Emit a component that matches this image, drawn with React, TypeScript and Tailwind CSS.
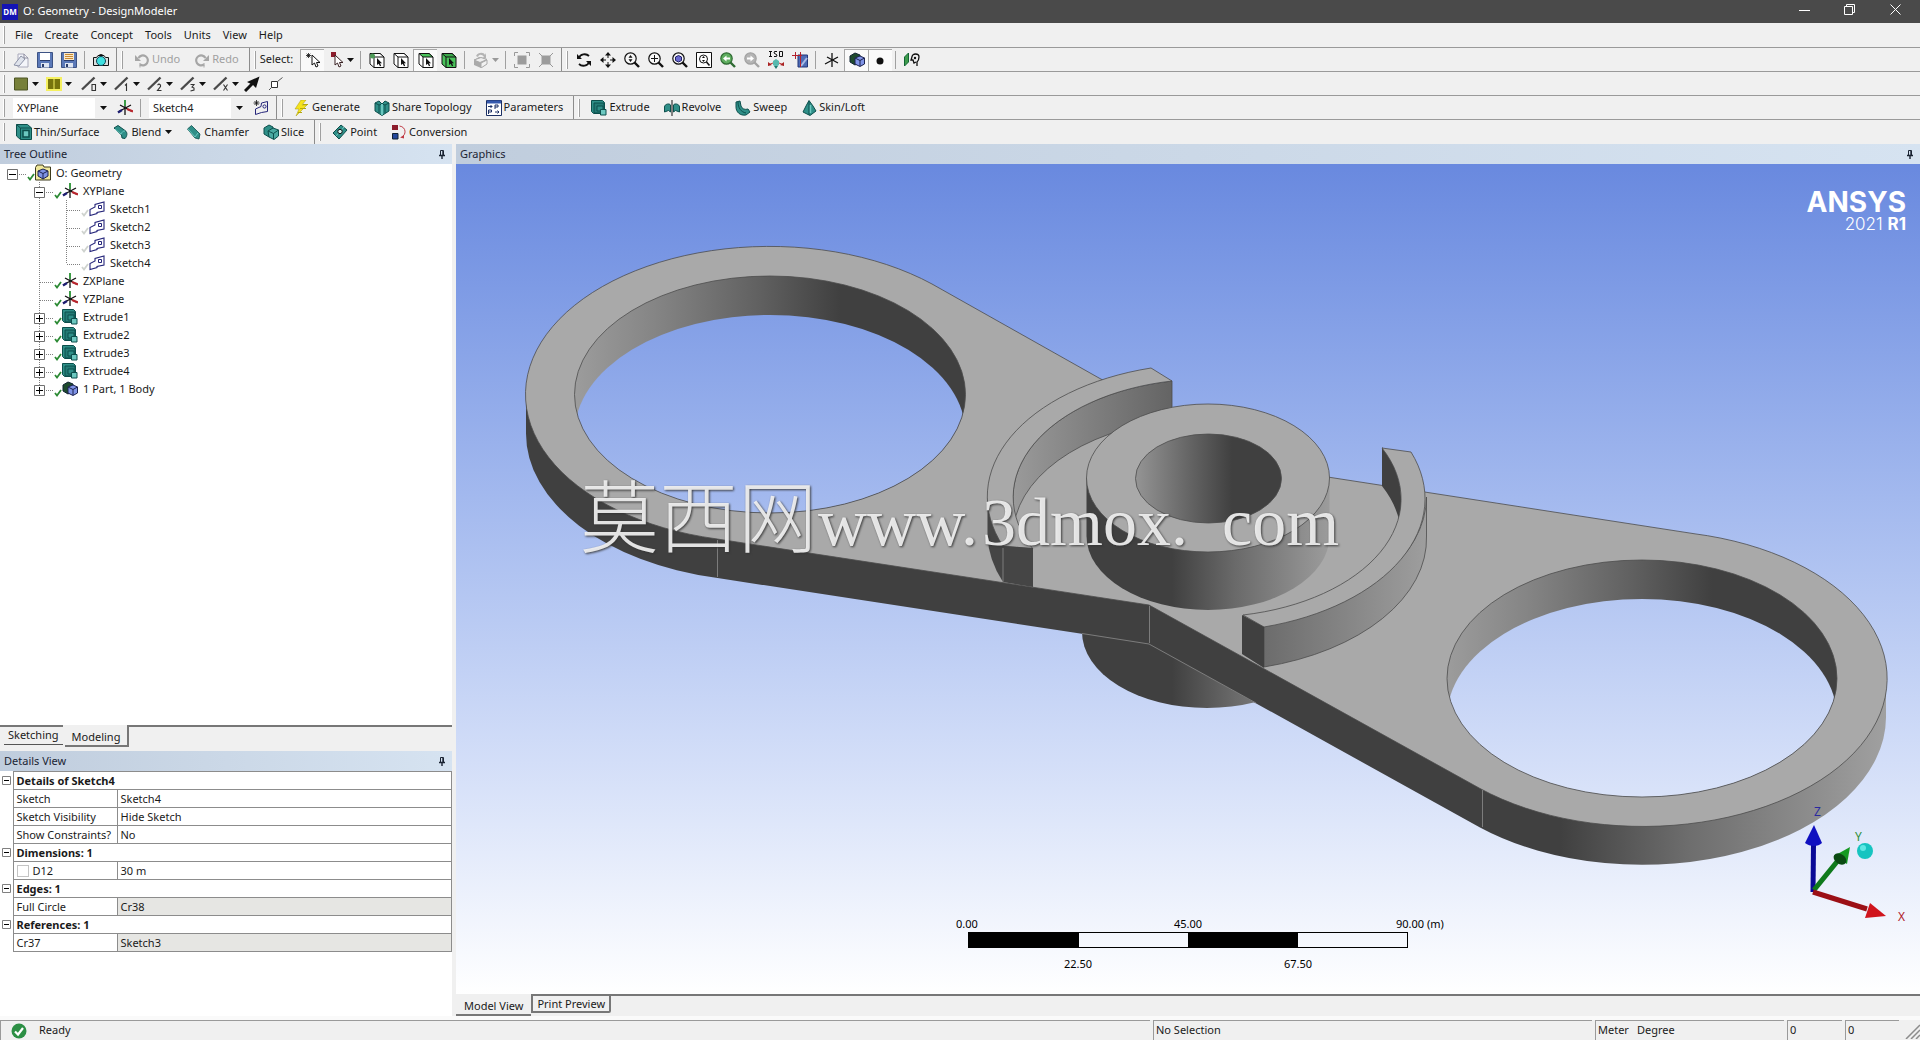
import type { ReactNode } from "react";
import clsx from "clsx";

const BLACK = "#111";
const TEAL = "#2f8f88";
const TEAL_DARK = "#0d4f4c";
const TEAL_LIGHT = "#6cc8c0";

function Svg({ children, size = 16 }: { children: ReactNode; size?: number }) {
  return (
    <svg width={size} height={size} viewBox="0 0 16 16" fill="none" className="shrink-0" aria-hidden="true">
      {children}
    </svg>
  );
}

/* ---------- toolbar icons ---------- */

const NewIcon = () => (
  <Svg>
    <path d="M5 2h6l4 4v9H5z" fill="#f4f5fa" stroke="#aab" />
    <path d="M1 13 8 4l4 3-6 7z" fill="#dfe3ec" stroke="#8d93a8" />
    <path d="M11 2v4h4" stroke="#889" />
  </Svg>
);

const SaveIcon = ({ list }: { list?: boolean }) => (
  <Svg>
    <path d="M.5.5h15v15h-15z" fill="#5b79b8" stroke="#3d5384" />
    <path d="M3 1h10v7H3z" fill={list ? "#fbe9c8" : "#fff"} />
    <path d="M3 8.500h10" stroke="#2b3c68" />
    {list && <path d="M4 2.500h8M4 4.500h8M4 6.500h8" stroke="#c88a35" />}
    <path d="M4 11h8v4.500H4z" fill="#dfe6f2" />
    <path d="M5 12h2v3H5z" fill="#2b3c68" />
  </Svg>
);

const CameraIcon = () => (
  <Svg>
    <path d="M.5 5.500h3L5 3.500h6l1.500 2h3v8H.5z" fill="#d8dede" stroke={BLACK} />
    <circle cx="8" cy="9" r="4.500" fill="#3fe0e0" stroke="#145" />
    <path d="M6.500 2.500h3" stroke="#333" />
  </Svg>
);

const UndoIcon = ({ flip }: { flip?: boolean }) => (
  <Svg>
    <g transform={flip ? "matrix(-1 0 0 1 16 0)" : undefined}>
      <path d="M4.500 6A5 5 0 1 1 6 12.500" stroke="#a6a6a6" strokeWidth="2.200" />
      <path d="M1 3v6h6z" fill="#a6a6a6" />
      <path d="M6 11v4.500" stroke="#a6a6a6" />
    </g>
  </Svg>
);

const CURSOR = "M7 3v10l2.500-2 1.500 4 2-1-1.500-3.500H15z";

const SelectIcon = () => (
  <Svg>
    <path d="M3.500 1v5M1 3.500h5M1.700 1.700l3.600 3.600M5.300 1.700 1.700 5.300" stroke={BLACK} strokeWidth=".8" />
    <path d={CURSOR} fill="#fff" stroke={BLACK} />
  </Svg>
);

const SelectModeIcon = () => (
  <Svg>
    <path d="M3 0h5v5H3z" fill="#8c1c2c" />
    <path d={CURSOR} fill="#fff" stroke="#3a2224" />
  </Svg>
);

function FilterCube({ front = "#fff", top = "#fff", dot }: { front?: string; top?: string; dot?: boolean }) {
  return (
    <Svg>
      <path d="M1 1.500h10l4 3.500v10.500H5L1 12z" fill={front} stroke={BLACK} />
      <path d="M1 1.500h10l4 3.500H5z" fill={top} stroke={BLACK} />
      <path d="M5 5v10.500" stroke={BLACK} />
      {dot && <circle cx="3.500" cy="4" r="2.500" fill="#4d9b57" />}
      <path d="M8 6v7l1.700-1.300 1.300 2.600 1.200-.6-1.200-2.500H13z" fill={BLACK} />
    </Svg>
  );
}

const GreyCube = () => (
  <Svg>
    <path d="M1 8l5-3 8 2v5l-6 4-7-3z" fill="#aaa" />
    <path d="M1 8l6 2.500 7-3-6-2z" fill="#eee" stroke="#aaa" />
    <path d="M8 11v5l6-4V8z" fill="#f2f2f2" stroke="#aaa" />
    <path d="M3 4c2-4 8-4 9-1l1-2v5H9l2-1C9 2 6 2 5 5z" fill="#b4b4b4" />
  </Svg>
);

const GreyBox = ({ diagonal }: { diagonal?: boolean }) => (
  <Svg>
    <path d="M3.500 3.500h9v9h-9z" fill="#9c9c9c" />
    <path d={diagonal ? "M1 1l3 3M15 1l-3 3M1 15l3-3M15 15l-3-3" : "M.5 4V.5H4M12 .5h3.500V4M15.500 12v3.500H12M4 15.500H.5V12"} stroke="#999" />
  </Svg>
);

const RotateIcon = () => (
  <Svg>
    <path d="M3 6c1-4 7-5 10-2M13 10c-1 4-7 5-10 2" stroke={BLACK} strokeWidth="1.800" />
    <path d="M1 2v5h5zM15 14V9h-5z" fill={BLACK} />
  </Svg>
);

const PanIcon = () => (
  <Svg>
    <path d="M8 3v3M8 10v3M3 8h3M10 8h3" stroke={BLACK} />
    <path d="M8 0l3 3.500H5zM8 16l3-3.500H5zM0 8l3.500-3v6zM16 8l-3.500-3v6z" fill={BLACK} />
  </Svg>
);

function Magnifier({ color = BLACK, fill = "#f7f7f7", children }: { color?: string; fill?: string; children?: ReactNode }) {
  return (
    <Svg>
      <path d="M10.500 10.500 15 15" stroke={color} strokeWidth="2.400" />
      <circle cx="6.500" cy="6.500" r="5.700" fill={fill} stroke={color} strokeWidth="1.200" />
      {children}
    </Svg>
  );
}

const IsoIcon = () => (
  <svg width="18" height="18" viewBox="0 0 18 18" fill="none" aria-hidden="true">
    <path d="M2 .5h3M3.500 .5v5M2 5.500h3M10 .5H7.500L7 2l3 2-.5 1.500H7M12.500 .5h3v5h-3z" stroke={BLACK} />
    <path d="M9 8l3 2v4l-3 2-3-2v-4z" fill="#58b9ae" />
    <path d="M6 12l-5 2M12 12l5 2" stroke="#b33" />
    <path d="M1 11v4l4-1zM17 11v4l-4-1z" fill="#a22" />
    <path d="M7 15h4l-2 3z" fill="#1f7a70" />
  </svg>
);

const PlaneViewIcon = () => (
  <Svg>
    <path d="M6 3h9.500v12H6z" fill="#4d6bb5" stroke="#23377a" />
    <path d="M9 14l6-8" stroke="#a9bbe6" strokeWidth="2" />
    <path d="M0 3.500h10M3.500 0v7M8.500 0v15" stroke="#b3202c" />
  </Svg>
);

const AxisIcon = ({ color }: { color?: boolean }) => (
  <Svg>
    <path d="M8 1v14" stroke={BLACK} strokeWidth="1.300" />
    <path d="M1 12l13-7M3 5l11 6" stroke={BLACK} strokeWidth="1.300" />
    {color && (
      <>
        <path d="M8 6V0" stroke="#3c9b46" strokeWidth="2" />
        <path d="M10 9l6 2.500" stroke="#b8242c" strokeWidth="2.200" />
        <path d="M5 10l-4 2.500" stroke="#1c1c70" strokeWidth="2.200" />
      </>
    )}
  </Svg>
);

const BodyIcon = () => (
  <Svg>
    <path d="M1 4l5-3 5 2v7l-5 3-5-3z" fill="#1e4a2c" stroke="#123" />
    <path d="M6 6l5-2 4.500 2v6L11 14.500 6 12z" fill="#7f93e6" stroke="#1d2350" />
    <path d="M6 6l5 2.500L15.500 6M11 8.500V14" stroke="#1d2350" />
  </Svg>
);

const LookAtIcon = () => (
  <Svg>
    <path d="M.5 5l4-4v9l-4 4z" fill="#3e9c4c" stroke="#163" />
    <path d="M8 5c0-4 7-4 7 0 0 3-1 4-2 5v4M8 5l-1 3h2l1 3 2-1" stroke={BLACK} strokeWidth="1.300" />
    <circle cx="11" cy="6" r="1.200" fill={BLACK} />
  </Svg>
);

const LineIcon = ({ mark }: { mark: string }) => (
  <svg width="20" height="16" viewBox="-6 0 20 16" fill="none" aria-hidden="true">
    <path d="M-1 13.500 11.500 1.500" stroke="#4a4a4a" strokeWidth="2.400" />
    <path d={mark} stroke="#333" strokeWidth="1.100" />
  </svg>
);

const LINE_MARKS = [
  "M9 8.500h3.500v6H9z",
  "M9 9.500l1.500-1.500v7",
  "M8.500 9l1.500-1 1.500 1v1.500L8.500 14.500h4",
  "M8.500 8.500H12l-2 2.500 2 1v2l-3.500 1",
  "M8.500 8.500l4 6M12.500 8.500l-4 6",
];

const ArrowIcon = () => (
  <Svg>
    <path d="M1 15l8-8" stroke={BLACK} strokeWidth="3" />
    <path d="M15.500 .5 12 12 9 9 3 6z" fill={BLACK} />
  </Svg>
);

const NodeIcon = () => (
  <Svg>
    <path d="M3.500 5.500h6v6h-6z" fill="#fff" stroke="#333" />
    <path d="M9.500 5.500l5-4M1 14l2.500-2.500" stroke="#555" />
  </Svg>
);

const SketchIcon = () => (
  <Svg>
    <path d="M1 14.500V8.500l5-2.500V3.500L15 1v9l-7 1.500v1z" fill="#fff" stroke="#25257a" strokeWidth="1.100" />
    <path d="M9.500 4.500h3v3h-3z" stroke="#25257a" />
  </Svg>
);

const NewSketchIcon = () => (
  <Svg>
    <path d="M2.500 14.500V9L8 6.500 8.500 3l6-1.500v10l-6 1z" stroke="#25257a" />
    <circle cx="11.500" cy="6.500" r="1.600" stroke="#25257a" />
    <path d="M3.500 0v6M.5 3h6M1.500 1l4 4M5.500 1l-4 4" stroke={BLACK} strokeWidth=".8" />
  </Svg>
);

const GenerateIcon = () => (
  <Svg>
    <path d="M7 0h5L8 5h5L2 16l3-7H1z" fill="#f6e31c" stroke="#a79a10" strokeWidth=".5" />
    <path d="M9 4.500h5M6 8.500h6M4 12.500h4" stroke="#b5a70c" />
  </Svg>
);

const ShareIcon = () => (
  <Svg>
    <path d="M1 3l4-2 3 3 3-3 4 2v8l-7 4.500L1 11z" fill={TEAL} stroke={TEAL_DARK} />
    <path d="M1 3l4 2 3-1 3 1 4-2" stroke={TEAL_DARK} />
    <path d="M8 4v11" stroke={TEAL_LIGHT} strokeWidth="2" />
    <path d="M5 5v8M11 5v8" stroke={TEAL_DARK} />
  </Svg>
);

const ParametersIcon = () => (
  <Svg>
    <path d="M.5 .5h15v15H.5z" fill="#fff" stroke="#1c2f63" />
    <path d="M1 2h14" stroke="#3558ac" strokeWidth="3" />
    <path d="M2 6.500h4M4.500 5l1.500 1.500L4.500 8M9 9V5h3v2H9M2.500 14v-4h3v2h-3M9 12h4M11.500 10.500 13 12l-1.500 1.500" stroke="#1c2f63" />
  </Svg>
);

const ExtrudeIcon = () => (
  <Svg>
    <path d="M.5 .5h11l2 2v11h-11l-2-2z" fill={TEAL} stroke={TEAL_DARK} />
    <path d="M3 3h10v10H3z" fill="#237a74" stroke={TEAL_DARK} />
    <path d="M6 6h6v5H6z" fill={TEAL} stroke={TEAL_DARK} />
    <path d="M9.500 9.500h5.500v5.500H9.500z" fill={TEAL_LIGHT} stroke={TEAL_DARK} />
  </Svg>
);

const RevolveIcon = () => (
  <Svg>
    <path d="M.5 12V7c0-3 5-4 6-2v7l-2-1.500zM15.500 12V7c0-3-5-4-6-2v7l2-1.500z" fill={TEAL} stroke={TEAL_DARK} />
    <path d="M8 0v16" stroke={BLACK} />
  </Svg>
);

const SweepIcon = () => (
  <Svg>
    <path d="M1 2l4-1 1 5c1 3 4 4 7 3l2 3-4 3C5 16 1 12 1 7z" fill={TEAL} stroke={TEAL_DARK} />
    <path d="M3 2c0 6 3 10 8 11" stroke={TEAL_DARK} />
  </Svg>
);

const SkinIcon = () => (
  <Svg>
    <path d="M8 .5 12 6l3 5-6 4.500L2 12l3-6z" fill={TEAL} stroke={TEAL_DARK} />
    <path d="M8 1v14" stroke={TEAL_DARK} />
    <path d="M9.500 5v8" stroke={TEAL_LIGHT} strokeWidth="1.500" />
  </Svg>
);

const ThinIcon = () => (
  <Svg>
    <path d="M.5 .5h11l4 3.500v11.500H4.500l-4-3.500z" fill={TEAL} stroke={TEAL_DARK} />
    <path d="M.5 .5 4.500 4h11M4.500 4v11.500" stroke={TEAL_DARK} />
    <path d="M7 6.500h6v6.500H7z" fill={TEAL_LIGHT} stroke={TEAL_DARK} strokeWidth="1.500" />
  </Svg>
);

const BlendIcon = () => (
  <Svg>
    <path d="M1 4l4-2.500 7 5c3 2 2 6 0 8L9 14l-.5-3z" fill={TEAL} stroke={TEAL_DARK} />
    <path d="M2 5l6 5c1-2 2-3 4-3" stroke={TEAL_LIGHT} />
  </Svg>
);

const ChamferIcon = () => (
  <Svg>
    <path d="M1.500 5l4-3.500L14 10l-1 5-4-1z" fill={TEAL} stroke={TEAL_DARK} strokeWidth=".8" />
    <path d="M2 5l7 8 3-4" stroke={TEAL_LIGHT} />
  </Svg>
);

const SliceIcon = () => (
  <Svg>
    <path d="M1 4l5-3 4 2v7l-4 3-5-3z" fill={TEAL} stroke={TEAL_DARK} />
    <path d="M5 7l5-3 5.500 2v6L11 15.500 6 13z" fill="#4aaaa2" stroke={TEAL_DARK} />
    <path d="M5 7l5.500 2.500 5-3.500M10.500 9.500V15" stroke={TEAL_DARK} />
  </Svg>
);

const PointIcon = () => (
  <Svg>
    <path d="M1 9 9 1l6 5-8 9z" fill={TEAL} stroke={TEAL_DARK} />
    <path d="M4 12l8-9" stroke={TEAL_LIGHT} />
    <circle cx="8" cy="7.500" r="2.200" fill="#d7f3f0" stroke={BLACK} />
  </Svg>
);

const ConversionIcon = () => (
  <Svg>
    <path d="M1 1h6v5H1z" fill="#8c1c2c" />
    <path d="M1.500 9.500h5.500v5.500H1.500z" fill="#23479b" stroke="#123" />
    <path d="M8.500 2c7 1 7 9 2 11" stroke="#c03a44" />
    <path d="M9 13.500l4-2v3z" fill="#c03a44" />
  </Svg>
);

const ProjectIcon = () => (
  <svg width="16" height="18" viewBox="0 0 16 18" fill="none" aria-hidden="true">
    <path d="M.5 3.500 2 1h6l1 2h6.500v13H.5z" fill="#efe79a" stroke="#3c3a1c" />
    <path d="M3 7l5-2 5 2v5l-5 3-5-3z" fill="#7f93e6" stroke="#1d2350" />
    <path d="M3 7l5 2.500L13 7M8 9.500V15" stroke="#1d2350" />
  </svg>
);

const PinIcon = () => (
  <svg width="8" height="11" viewBox="0 0 8 11" fill="none" aria-hidden="true">
    <path d="M2.500 6V1.500h3V6" stroke="#1b2433" />
    <path d="M5 2v4M1 6.500h6M4 7v3" stroke="#1b2433" strokeWidth="1.400" />
  </svg>
);

const Caret = ({ muted }: { muted?: boolean }) => (
  <svg width="7" height="4" viewBox="0 0 7 4" className="shrink-0" aria-hidden="true">
    <path d="M0 0h7L3.500 4z" fill={muted ? "#999" : BLACK} />
  </svg>
);

/* ---------- toolbar parts ---------- */

function ToolRow({ children, last }: { children: ReactNode; last?: boolean }) {
  return (
    <div className={clsx("flex h-6 items-stretch", !last && "border-b border-[#9a9a9a]")}>{children}</div>
  );
}

function Group({ children, end }: { children: ReactNode; end?: boolean }) {
  return (
    <div className={clsx("flex items-center pl-[3px]", end && "mr-px border-r border-[#8c8c8c] pr-[3px]")}>
      <span className="mr-1 h-[18px] w-[2px] shrink-0 border-r border-[#a0a0a0] bg-white" />
      {children}
    </div>
  );
}

const Sep = () => <span className="mr-1 ml-[3px] h-[18px] w-px shrink-0 bg-[#a0a0a0]" />;

function Tool({ label, children, pressed, wide }: { label: string; children: ReactNode; pressed?: boolean; wide?: boolean }) {
  return (
    <button
      type="button"
      title={label}
      aria-label={label}
      className={clsx(
        "flex h-[22px] shrink-0 items-center justify-center gap-[3px]",
        wide ? "w-[33px]" : "w-6",
        pressed && "border-t border-l border-[#a8a8a8] bg-[#fafafa]",
      )}
    >
      {children}
    </button>
  );
}

function TextTool({ icon, label, caret, disabled }: { icon: ReactNode; label: string; caret?: boolean; disabled?: boolean }) {
  return (
    <button
      type="button"
      disabled={disabled}
      className={clsx("flex h-[22px] shrink-0 items-center gap-[2px] px-[7px]", disabled && "text-[#a0a0a0]")}
    >
      {icon}
      <span>{label}</span>
      {caret && (
        <span className="ml-[2px]">
          <Caret />
        </span>
      )}
    </button>
  );
}

function Picker({ label, value }: { label: string; value: string }) {
  return (
    <div className="relative flex h-5 items-center">
      <select
        aria-label={label}
        className="h-5 w-[98px] appearance-none bg-white pl-1 text-[11px] leading-4 text-[#222]"
        defaultValue={value}
      >
        <option>{value}</option>
      </select>
      <span className="pointer-events-none absolute inset-y-0 right-0 flex w-4 items-center justify-center bg-[#f0f0f0]">
        <Caret />
      </span>
    </div>
  );
}

function PanelHeader({ title }: { title: string }) {
  return (
    <header className="flex h-5 shrink-0 items-center justify-between bg-linear-to-r from-[#c0cddd] to-[#d6e3f1] pr-1.5 pl-1 text-[#1b2433]">
      <h2>{title}</h2>
      <button type="button" aria-label={`Pin ${title}`}>
        <PinIcon />
      </button>
    </header>
  );
}

/* ---------- tree outline ---------- */

type Cell = "plus" | "minus" | "tee" | "corner" | "pass" | "blank";

interface TreeItem {
  label: string;
  icon: ReactNode;
  cells: Cell[];
  faded?: boolean;
}

const plane = <AxisIcon color />;

const TREE: TreeItem[] = [
  { label: "O: Geometry", icon: <ProjectIcon />, cells: ["minus"] },
  { label: "XYPlane", icon: plane, cells: ["blank", "minus"] },
  { label: "Sketch1", icon: <SketchIcon />, cells: ["blank", "pass", "tee"], faded: true },
  { label: "Sketch2", icon: <SketchIcon />, cells: ["blank", "pass", "tee"], faded: true },
  { label: "Sketch3", icon: <SketchIcon />, cells: ["blank", "pass", "tee"], faded: true },
  { label: "Sketch4", icon: <SketchIcon />, cells: ["blank", "pass", "corner"], faded: true },
  { label: "ZXPlane", icon: plane, cells: ["blank", "tee"] },
  { label: "YZPlane", icon: plane, cells: ["blank", "tee"] },
  { label: "Extrude1", icon: <ExtrudeIcon />, cells: ["blank", "plus"] },
  { label: "Extrude2", icon: <ExtrudeIcon />, cells: ["blank", "plus"] },
  { label: "Extrude3", icon: <ExtrudeIcon />, cells: ["blank", "plus"] },
  { label: "Extrude4", icon: <ExtrudeIcon />, cells: ["blank", "plus"] },
  { label: "1 Part, 1 Body", icon: <BodyIcon />, cells: ["blank", "plus"] },
];

function GuideCell({ kind, root, end }: { kind: Cell; root: boolean; end: boolean }) {
  const box = kind === "plus" || kind === "minus";
  return (
    <svg width="27" height="18" viewBox="0 0 27 18" fill="none" className="shrink-0" aria-hidden="true">
      <g stroke="#808080" strokeDasharray="1 1">
        {kind !== "blank" && !root && <path d={kind === "corner" || end ? "M12.500 0v10" : "M12.500 0v18"} />}
        {kind !== "blank" && kind !== "pass" && <path d="M13 10.500h13" />}
      </g>
      {box && (
        <>
          <path d="M7.500 5.500h10v10h-10z" fill="#fff" stroke="#707070" />
          <path d={kind === "plus" ? "M9 10.500h7M12.500 7v7" : "M9 10.500h7"} stroke="#000" />
        </>
      )}
    </svg>
  );
}

function TreeOutline() {
  return (
    <ul className="min-h-0 flex-1 overflow-hidden bg-white">
      {TREE.map((item, row) => (
        <li key={item.label} className="flex h-[18px] items-center">
          {item.cells.map((kind, i) => (
            <GuideCell key={i} kind={kind} root={row === 0} end={row === TREE.length - 1} />
          ))}
          <svg width="8" height="18" viewBox="0 0 8 18" fill="none" className="shrink-0" aria-hidden="true">
            <path d="M1 13l2 2.500L7 10" stroke={item.faded ? "#cfd3cf" : "#2c8a34"} strokeWidth="1.800" />
          </svg>
          {item.icon}
          <span className="pl-[5px] leading-4">{item.label}</span>
        </li>
      ))}
    </ul>
  );
}

/* ---------- details view ---------- */

interface DetailGroup {
  title: string;
  rows: { name: string; value: string; check?: boolean; locked?: boolean }[];
}

const DETAILS: DetailGroup[] = [
  {
    title: "Details of Sketch4",
    rows: [
      { name: "Sketch", value: "Sketch4" },
      { name: "Sketch Visibility", value: "Hide Sketch" },
      { name: "Show Constraints?", value: "No" },
    ],
  },
  { title: "Dimensions: 1", rows: [{ name: "D12", value: "30 m", check: true }] },
  { title: "Edges: 1", rows: [{ name: "Full Circle", value: "Cr38", locked: true }] },
  { title: "References: 1", rows: [{ name: "Cr37", value: "Sketch3", locked: true }] },
];

function DetailsTable() {
  return (
    <table className="w-full table-fixed border-collapse leading-4">
      <colgroup>
        <col className="w-[13px]" />
        <col className="w-[104px]" />
        <col />
      </colgroup>
      {DETAILS.map((group) => (
        <tbody key={group.title}>
          <tr className="h-[18px]">
            <td className="p-0">
              <svg width="11" height="11" viewBox="0 0 11 11" className="ml-[1px]" fill="none" aria-hidden="true">
                <path d="M1.500 1.500h8v8h-8z" stroke="#808080" />
                <path d="M3 5.500h5" stroke="#000" />
              </svg>
            </td>
            <th colSpan={2} className="border border-[#8c8c8c] py-0 pl-[3px] text-left font-bold">
              {group.title}
            </th>
          </tr>
          {group.rows.map((row) => (
            <tr key={row.name} className="h-[18px]">
              <td className="p-0" />
              <td className="border border-[#8c8c8c] py-0 pr-0 pl-[3px] whitespace-nowrap">
                {row.check ? (
                  <label className="flex items-center gap-1">
                    <input type="checkbox" className="size-3 appearance-none border border-[#c4c4c4] bg-white" />
                    {row.name}
                  </label>
                ) : (
                  row.name
                )}
              </td>
              <td className={clsx("border border-[#8c8c8c] py-0 pl-[3px]", row.locked && "bg-[#e6e6e3]")}>{row.value}</td>
            </tr>
          ))}
        </tbody>
      ))}
    </table>
  );
}

/* ---------- model ---------- */

// Outline of the two-eyed plate; the sides are the same outline 39 units lower.
const PLATE =
  "M716 538.800A244 148 0 1 1 932 284L1099 378L1263 467L1694 533.700A244 148 0 1 1 1480 788.500L1149 605Z";
const PLATE_SIDE =
  "M526 394V433A244 148 0 0 0 716 577.800L1149 644L1480 827.500A244 148 0 0 0 1886 717.500V678.500L1482 740L1149 560L716 500Z";
const EDGE = "#4c4c4c";

function Model() {
  return (
    <svg
      viewBox="456 164 1464 830"
      preserveAspectRatio="xMidYMid meet"
      className="block h-full w-full"
      role="img"
      aria-label="Geometry"
      fill="none"
    >
      <defs>
        <linearGradient id="ringA" gradientUnits="userSpaceOnUse" x1="575" x2="840" y1="0" y2="0">
          <stop offset="0" stopColor="#9c9c9c" />
          <stop offset=".3" stopColor="#858585" />
          <stop offset=".7" stopColor="#606060" />
          <stop offset="1" stopColor="#404040" />
        </linearGradient>
        <linearGradient id="ringB" gradientUnits="userSpaceOnUse" x1="1447" x2="1712" y1="0" y2="0">
          <stop offset="0" stopColor="#9c9c9c" />
          <stop offset=".3" stopColor="#858585" />
          <stop offset=".7" stopColor="#606060" />
          <stop offset="1" stopColor="#404040" />
        </linearGradient>
        <linearGradient id="side" gradientUnits="userSpaceOnUse" x1="1560" x2="1886" y1="0" y2="0">
          <stop offset="0" stopColor="#404040" />
          <stop offset=".4" stopColor="#6e6e6e" />
          <stop offset="1" stopColor="#a0a0a0" />
        </linearGradient>
        <linearGradient id="hub" gradientUnits="userSpaceOnUse" x1="1172" x2="1330" y1="0" y2="0">
          <stop offset="0" stopColor="#404040" />
          <stop offset=".4" stopColor="#6a6a6a" />
          <stop offset="1" stopColor="#9c9c9c" />
        </linearGradient>
        <linearGradient id="bore" gradientUnits="userSpaceOnUse" x1="1136" x2="1232" y1="0" y2="0">
          <stop offset="0" stopColor="#949494" />
          <stop offset=".6" stopColor="#616161" />
          <stop offset="1" stopColor="#404040" />
        </linearGradient>
        <linearGradient id="wallA" gradientUnits="userSpaceOnUse" x1="1013" x2="1172" y1="0" y2="0">
          <stop offset="0" stopColor="#9a9a9a" />
          <stop offset="1" stopColor="#646464" />
        </linearGradient>
        <linearGradient id="wallB" gradientUnits="userSpaceOnUse" x1="1264" x2="1427" y1="0" y2="0">
          <stop offset="0" stopColor="#6c6c6c" />
          <stop offset="1" stopColor="#9e9e9e" />
        </linearGradient>
        <clipPath id="eyeA">
          <ellipse cx="770" cy="394.500" rx="195.500" ry="118.500" />
        </clipPath>
        <clipPath id="eyeB">
          <ellipse cx="1642" cy="678.500" rx="195" ry="118.500" />
        </clipPath>
        <mask id="through" maskUnits="userSpaceOnUse" x="456" y="164" width="1464" height="830">
          <rect x="456" y="164" width="1464" height="830" fill="#fff" />
          <ellipse cx="770" cy="433.500" rx="195.500" ry="118.500" fill="#000" clipPath="url(#eyeA)" />
          <ellipse cx="1642" cy="717.500" rx="195" ry="118.500" fill="#000" clipPath="url(#eyeB)" />
        </mask>
      </defs>

      {/* boss under the plate */}
      <path d="M1082 610V632A125 76 0 0 0 1332 632V610Z" fill="url(#hub)" />

      <g mask="url(#through)">
        <path d={PLATE_SIDE} fill="url(#side)" />
        <path d={PLATE} fill="#a9a9a9" stroke={EDGE} strokeWidth=".8" />
        <ellipse cx="770" cy="394.500" rx="195.500" ry="118.500" fill="url(#ringA)" />
        <ellipse cx="1642" cy="678.500" rx="195" ry="118.500" fill="url(#ringB)" />
      </g>
      <ellipse cx="770" cy="394.500" rx="195.500" ry="118.500" stroke={EDGE} strokeWidth=".8" />
      <ellipse cx="1642" cy="678.500" rx="195" ry="118.500" stroke={EDGE} strokeWidth=".8" />
      <path d="M717.500 540v37M1149.500 606v37M1482.500 790v37M1082 633.500l67 10.500 107 59" stroke="#8c8c8c" strokeWidth=".8" />

      {/* left guard */}
      <path d="M1172 381A194 118 0 0 0 1013 497V536A194 118 0 0 1 1172 420Z" fill="url(#wallA)" stroke={EDGE} strokeWidth=".8" />
      <path d="M987.500 497V536A219.500 133 0 0 0 1003 582V546Z" fill="#454545" />
      <path d="M1151 368A219.500 133 0 0 0 1003 546L1033 549A194 118 0 0 1 1172 381Z" fill="#a9a9a9" stroke={EDGE} strokeWidth=".8" />
      <path d="M1003 546L1033 548V587L1003 582Z" fill="#454545" />
      <path d="M1003 548v34" stroke="#8c8c8c" strokeWidth=".8" />

      {/* right guard */}
      <path d="M1382 447A194 118 0 0 1 1401 497V536A194 118 0 0 0 1382 486Z" fill="#404040" />
      <path
        d="M1426.500 497V536A219.500 133 0 0 1 1264 667V625A219.500 133 0 0 0 1426.500 497Z"
        fill="url(#wallB)"
        stroke={EDGE}
        strokeWidth=".8"
      />
      <path d="M1382 448L1411 452A219.500 133 0 0 1 1264 627L1243 615A194 118 0 0 0 1382 448Z" fill="#a9a9a9" stroke={EDGE} strokeWidth=".8" />
      <path d="M1242 615L1264 627V668L1242 654Z" fill="#404040" />

      {/* hub */}
      <path d="M1086.500 478V536A121.500 74 0 0 0 1329.500 536V478Z" fill="url(#hub)" />
      <ellipse cx="1208" cy="478" rx="121.500" ry="74" fill="#a9a9a9" stroke={EDGE} strokeWidth=".8" />
      <ellipse cx="1208.500" cy="478.500" rx="73" ry="44.500" fill="url(#bore)" stroke={EDGE} strokeWidth=".8" />

      {/* orientation triad */}
      <path d="M1813 892L1813.500 845" stroke="#0a0a96" strokeWidth="5" />
      <path d="M1814 825l8 18c-4 4-12 4-17 0z" fill="#1010c0" />
      <path d="M1814 890l26-32" stroke="#0f7a1c" strokeWidth="5" />
      <path d="M1850 847l-3 17-13-8z" fill="#159a22" />
      <ellipse cx="1840" cy="859" rx="7" ry="5" transform="rotate(35 1840 859)" fill="#0a4a12" />
      <path d="M1813 892l54 17" stroke="#9c1016" strokeWidth="5" />
      <path d="M1886 916l-21 2 5-15z" fill="#d0141c" />
      <circle cx="1865" cy="851" r="8" fill="#16c4c0" />
      <circle cx="1863" cy="848" r="3" fill="#5fe8e4" />
      <g fontFamily="'Noto Sans', sans-serif" fontSize="12">
        <text x="1814" y="816" fill="#2a2aa0">Z</text>
        <text x="1855" y="841" fill="#2f8f3a">Y</text>
        <text x="1898" y="921" fill="#b0202a">X</text>
      </g>

      {/* watermark */}
      <g fill="#f2f2f2" fillOpacity=".92" className="drop-shadow-[1px_1px_1px_#333]">
        <text x="580" y="547" fontSize="79" fontWeight="300" fontFamily="'Noto Sans CJK SC', sans-serif">莫西网</text>
        <text y="545" fontSize="68" fontFamily="'Liberation Serif', serif">
          <tspan x="818">www. </tspan>
          <tspan x="982">3dmox. </tspan>
          <tspan x="1222">com</tspan>
        </text>
      </g>
    </svg>
  );
}

function ScaleBar() {
  return (
    <div className="absolute bottom-[22px] left-1/2 w-[440px] -translate-x-1/2 text-black">
      <div className="flex h-4 items-center justify-between leading-4">
        <span className="w-0 whitespace-nowrap"><span className="-ml-3">0.00</span></span>
        <span>45.00</span>
        <span className="w-0 whitespace-nowrap"><span className="-ml-3">90.00 (m)</span></span>
      </div>
      <div className="grid h-4 grid-cols-4 border border-black">
        <span className="bg-black" />
        <span />
        <span className="bg-black" />
        <span />
      </div>
      <div className="mt-2 grid h-4 grid-cols-2 text-center leading-4">
        <span>22.50</span>
        <span>67.50</span>
      </div>
    </div>
  );
}

/* ---------- status bar ---------- */

function StatusCell({ children, className }: { children?: ReactNode; className: string }) {
  return (
    <div className={clsx("mr-[3px] flex items-center border-t border-l border-[#9a9a9a] pl-[2px]", className)}>{children}</div>
  );
}

const MENUS = ["File", "Create", "Concept", "Tools", "Units", "View", "Help"];

export default function App() {
  return (
    <div className="flex h-screen flex-col overflow-hidden bg-[#f0f0f0] font-['Noto_Sans','Open_Sans',sans-serif] text-[11px] text-[#1a1a1a]">
      <div className="flex h-[23px] shrink-0 items-center bg-[#4a4a4a] text-white">
        <span className="ml-[2px] flex size-4 items-center justify-center bg-[#1414b4] text-[8px] font-bold">DM</span>
        <h1 className="ml-[5px]">O: Geometry - DesignModeler</h1>
        <div className="ml-auto flex h-full">
          <button type="button" aria-label="Minimize" className="flex w-[45px] items-center justify-center pb-1">
            <svg width="11" height="11" viewBox="0 0 11 11" stroke="#fff"><path d="M0 6.500h11" /></svg>
          </button>
          <button type="button" aria-label="Restore" className="flex w-[45px] items-center justify-center pb-1">
            <svg width="11" height="11" viewBox="0 0 11 11" stroke="#fff" fill="none"><path d="M.5 2.500h8v8h-8zM2.500 2V.5h8v8H9" /></svg>
          </button>
          <button type="button" aria-label="Close" className="mr-[2px] flex w-[46px] items-center justify-center pb-1">
            <svg width="11" height="11" viewBox="0 0 11 11" stroke="#fff"><path d="M.5 .5l10 10M10.500 .5l-10 10" /></svg>
          </button>
        </div>
      </div>

      <div className="shrink-0">
        <nav className="flex h-[25px] items-center border-b border-[#9a9a9a]">
          <Group>
            {MENUS.map((menu) => (
              <button key={menu} type="button" className="px-[6px]">
                {menu}
              </button>
            ))}
          </Group>
        </nav>

        <ToolRow>
          <Group end>
            <Tool label="New"><NewIcon /></Tool>
            <Tool label="Save"><SaveIcon /></Tool>
            <Tool label="Export"><SaveIcon list /></Tool>
            <Sep />
            <Tool label="Capture"><CameraIcon /></Tool>
          </Group>
          <Group end>
            <TextTool icon={<UndoIcon />} label="Undo" disabled />
            <TextTool icon={<UndoIcon flip />} label="Redo" disabled />
          </Group>
          <Group end>
            <span className="pr-[7px]">Select:</span>
            <Tool label="New selection" pressed><SelectIcon /></Tool>
            <Tool label="Select mode" wide><SelectModeIcon /><Caret /></Tool>
            <Sep />
            <Tool label="Points"><FilterCube dot /></Tool>
            <Tool label="Edges"><FilterCube /></Tool>
            <Tool label="Faces" pressed><FilterCube top="#49c25a" /></Tool>
            <Tool label="Bodies"><FilterCube front="#49c25a" top="#3aa84a" /></Tool>
            <Sep />
            <Tool label="Extend selection" wide><GreyCube /><Caret muted /></Tool>
            <Sep />
            <Tool label="Expand"><GreyBox /></Tool>
            <Tool label="Shrink"><GreyBox diagonal /></Tool>
          </Group>
          <Group>
            <Tool label="Rotate"><RotateIcon /></Tool>
            <Tool label="Pan"><PanIcon /></Tool>
            <Tool label="Zoom"><Magnifier><path d="M6.500 3l2 2.700h-4zM6.500 10l2-2.700h-4z" fill={BLACK} /></Magnifier></Tool>
            <Tool label="Box zoom"><Magnifier><path d="M6.500 3v7M3 6.500h7" stroke={BLACK} /></Magnifier></Tool>
            <Tool label="Zoom to fit"><Magnifier><path d="M3.500 5l3-1.500 3 1.500v3.500l-3 1.500-3-1.500z" fill="#6a6ad0" stroke="#20206a" /></Magnifier></Tool>
            <Tool label="Magnifier window">
              <Svg>
                <path d="M.5 .5h15v15H.5z" fill="#fff" stroke={BLACK} />
                <circle cx="7.500" cy="7" r="4" stroke={BLACK} />
                <path d="M10.500 10l3 3.500" stroke={BLACK} strokeWidth="1.600" />
                <path d="M7.500 4l1.500 2H6zM7.500 10 9 8H6z" fill={BLACK} />
              </Svg>
            </Tool>
            <Tool label="Previous view"><Magnifier color="#2f6b33" fill="#5fae5f"><path d="M3 6.500l3.500-3v2H10v2H6.500v2z" fill="#fff" /></Magnifier></Tool>
            <Tool label="Next view"><Magnifier color="#a3a3a3" fill="#b4b4b4"><path d="M10 6.500l-3.500-3v2H3v2h3.500v2z" fill="#fff" /></Magnifier></Tool>
            <Tool label="Isometric view"><IsoIcon /></Tool>
            <Tool label="Display plane"><PlaneViewIcon /></Tool>
            <Sep />
            <Tool label="Axes"><AxisIcon /></Tool>
            <Tool label="Display model" pressed><BodyIcon /></Tool>
            <Tool label="Display points" pressed><Svg><circle cx="7" cy="9" r="3.500" fill={BLACK} /></Svg></Tool>
            <Sep />
            <Tool label="Look at face"><LookAtIcon /></Tool>
          </Group>
        </ToolRow>

        <ToolRow>
          <Group>
            <Tool label="Face color" wide>
              <Svg><path d="M1.500 2h13v12h-13z" fill="#77803a" stroke="#4d5424" /></Svg>
              <Caret />
            </Tool>
            <Tool label="Edge color" wide>
              <Svg>
                <path d="M0 1h16v14H0z" fill="#f5f060" />
                <path d="M2 3h5.500v10H2zM8.500 3H14v10H8.500z" fill="#77740c" />
              </Svg>
              <Caret />
            </Tool>
            {LINE_MARKS.map((mark, i) => (
              <Tool key={mark} label={`Edge joint ${i}`} wide>
                <LineIcon mark={mark} />
                <Caret />
              </Tool>
            ))}
            <Tool label="Edge direction"><ArrowIcon /></Tool>
            <Tool label="Vertices"><NodeIcon /></Tool>
          </Group>
        </ToolRow>

        <ToolRow>
          <Group end>
            <span className="w-1" />
            <Picker label="Active plane" value="XYPlane" />
            <span className="w-[2px]" />
            <Tool label="New plane"><AxisIcon color /></Tool>
            <Sep />
            <span className="w-1" />
            <Picker label="Active sketch" value="Sketch4" />
            <span className="w-[2px]" />
            <Tool label="New sketch"><NewSketchIcon /></Tool>
          </Group>
          <Group end>
            <TextTool icon={<GenerateIcon />} label="Generate" />
            <TextTool icon={<ShareIcon />} label="Share Topology" />
            <TextTool icon={<ParametersIcon />} label="Parameters" />
          </Group>
          <Group>
            <TextTool icon={<ExtrudeIcon />} label="Extrude" />
            <TextTool icon={<RevolveIcon />} label="Revolve" />
            <TextTool icon={<SweepIcon />} label="Sweep" />
            <TextTool icon={<SkinIcon />} label="Skin/Loft" />
          </Group>
        </ToolRow>

        <ToolRow last>
          <Group end>
            <TextTool icon={<ThinIcon />} label="Thin/Surface" />
            <TextTool icon={<BlendIcon />} label="Blend" caret />
            <TextTool icon={<ChamferIcon />} label="Chamfer" />
            <TextTool icon={<SliceIcon />} label="Slice" />
          </Group>
          <Group>
            <TextTool icon={<PointIcon />} label="Point" />
            <TextTool icon={<ConversionIcon />} label="Conversion" />
          </Group>
        </ToolRow>
      </div>

      <main className="flex min-h-0 flex-1 gap-1">
        <aside className="flex w-[452px] shrink-0 flex-col">
          <PanelHeader title="Tree Outline" />
          <TreeOutline />
          <div className="flex h-[26px] shrink-0 items-start">
            <div className="border-t-2 border-[#777] pl-1">
              <button type="button" className="h-[18px] border-b border-[#555] px-1">Sketching</button>
            </div>
            <button type="button" className="ml-[2px] h-[22px] border-r-2 border-b-2 border-[#777] px-[7px] pt-1">Modeling</button>
            <div className="flex-1 border-t-2 border-[#777]" />
          </div>
          <PanelHeader title="Details View" />
          <div className="h-[245px] shrink-0 overflow-hidden bg-white">
            <DetailsTable />
          </div>
        </aside>

        <section className="flex min-w-0 flex-1 flex-col">
          <PanelHeader title="Graphics" />
          <div className="relative min-h-0 flex-1 bg-linear-to-b from-[#6989df] to-white">
            <Model />
            <div className="absolute top-6 right-[14px] text-right font-['Inter',sans-serif] text-white">
              <p className="text-[28px] leading-7 font-bold">ANSYS</p>
              <p className="text-[17px] leading-4 font-light">
                2021 <b className="font-bold">R1</b>
              </p>
            </div>
            <ScaleBar />
          </div>
          <div className="flex h-[22px] shrink-0 items-start">
            <button type="button" className="h-[22px] border-b-2 border-[#777] px-2 pt-1">Model View</button>
            <button type="button" className="h-[19px] rounded-br-xs border-2 border-[#777] px-1">Print Preview</button>
            <div className="flex-1 border-t-2 border-[#777]" />
          </div>
        </section>
      </main>

      <footer className="flex h-6 shrink-0 items-stretch border-t-4 border-[#fafafa]">
        <StatusCell className="flex-1">
          <svg width="16" height="16" viewBox="0 0 16 16" className="ml-2" aria-hidden="true">
            <circle cx="8" cy="8" r="7.500" fill="#2c8f45" />
            <path d="M4 8.500 7 11.500 12 5" fill="none" stroke="#fff" strokeWidth="2.200" />
          </svg>
          <span className="ml-3">Ready</span>
        </StatusCell>
        <StatusCell className="w-[439px]">No Selection</StatusCell>
        <StatusCell className="w-[189px] gap-2">
          <span>Meter</span>
          <span>Degree</span>
        </StatusCell>
        <StatusCell className="w-[55px]">0</StatusCell>
        <StatusCell className="w-[54px]">0</StatusCell>
        <svg width="18" height="19" viewBox="0 0 18 19" stroke="#8c8c8c" strokeWidth="1.500" aria-hidden="true">
          <path d="M4 19 18 5M9 19l9-9M14 19l4-4" />
        </svg>
      </footer>
    </div>
  );
}
